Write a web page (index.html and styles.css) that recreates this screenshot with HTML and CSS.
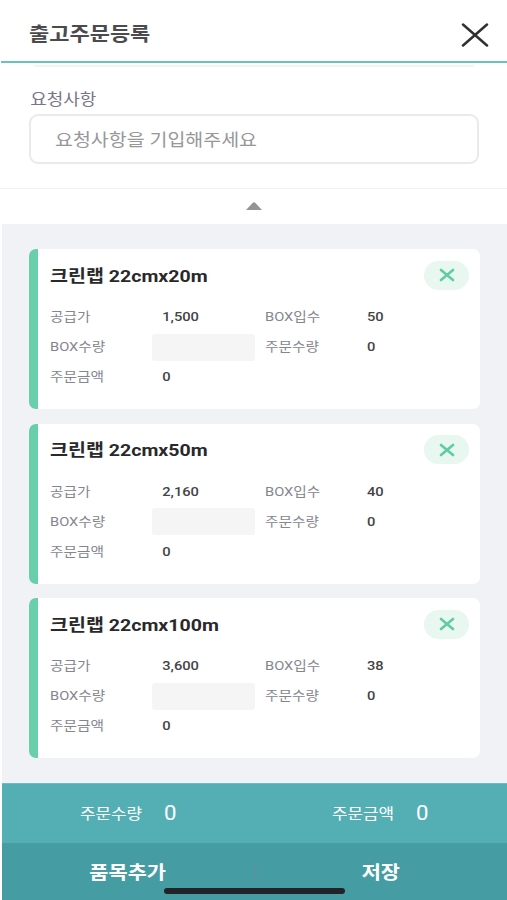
FILE: index.html
```html
<!DOCTYPE html>
<html lang="ko">
<head>
<meta charset="utf-8">
<title>출고주문등록</title>
<link rel="stylesheet" href="styles.css">
</head>
<body>
<div class="app">
  <header class="header">
    <h1 class="title wide">출고주문등록</h1>
    <svg class="close" width="28" height="24" viewBox="0 0 28 24"><path d="M2 1.5 26 22.5M26 1.5 2 22.5"/></svg>
  </header>
  <section class="request">
    <div class="field-edge"></div>
    <div class="request-label wide">요청사항</div>
    <div class="request-input"><span class="wide">요청사항을 기입해주세요</span></div>
  </section>
  <div class="toggle"><svg width="16" height="8" viewBox="0 0 16 8"><path d="M0 8 6.8.7Q8 -.4 9.2.7L16 8Z"/></svg></div>
  <main class="list">
    <article class="card">
      <div class="card-head"><h2 class="wide">크린랩 22cmx20m</h2><span class="remove"><svg width="16" height="14" viewBox="0 0 16 14"><path d="M2 2 14 12M14 2 2 12"/></svg></span></div>
      <div class="grid">
        <span class="label wide">공급가</span><span class="value wide">1,500</span><span class="label wide">BOX입수</span><span class="value wide">50</span>
        <span class="label wide">BOX수량</span><span class="qty"></span><span class="label wide">주문수량</span><span class="value wide">0</span>
        <span class="label wide">주문금액</span><span class="value wide">0</span>
      </div>
    </article>
    <article class="card">
      <div class="card-head"><h2 class="wide">크린랩 22cmx50m</h2><span class="remove"><svg width="16" height="14" viewBox="0 0 16 14"><path d="M2 2 14 12M14 2 2 12"/></svg></span></div>
      <div class="grid">
        <span class="label wide">공급가</span><span class="value wide">2,160</span><span class="label wide">BOX입수</span><span class="value wide">40</span>
        <span class="label wide">BOX수량</span><span class="qty"></span><span class="label wide">주문수량</span><span class="value wide">0</span>
        <span class="label wide">주문금액</span><span class="value wide">0</span>
      </div>
    </article>
    <article class="card">
      <div class="card-head"><h2 class="wide">크린랩 22cmx100m</h2><span class="remove"><svg width="16" height="14" viewBox="0 0 16 14"><path d="M2 2 14 12M14 2 2 12"/></svg></span></div>
      <div class="grid">
        <span class="label wide">공급가</span><span class="value wide">3,600</span><span class="label wide">BOX입수</span><span class="value wide">38</span>
        <span class="label wide">BOX수량</span><span class="qty"></span><span class="label wide">주문수량</span><span class="value wide">0</span>
        <span class="label wide">주문금액</span><span class="value wide">0</span>
      </div>
    </article>
  </main>
  <footer class="footer">
    <div class="totals">
      <div class="total"><span class="total-label wide">주문수량</span><span class="total-value wide">0</span></div>
      <div class="total"><span class="total-label wide">주문금액</span><span class="total-value wide">0</span></div>
    </div>
    <div class="actions">
      <div class="action"><span class="wide">품목추가</span></div>
      <div class="divider"></div>
      <div class="action"><span class="wide">저장</span></div>
      <div class="home-bar"></div>
    </div>
  </footer>
</div>
</body>
</html>
```
FILE: styles.css
```css
* { box-sizing: border-box; }
body { margin: 0; background: #fff; font-family: Roboto, "Noto Sans CJK KR", sans-serif; }
h1, h2 { margin: 0; }
svg { display: block; fill: none; }
.app { width: 507px; height: 900px; overflow: hidden; display: flex; flex-direction: column; }
.wide { display: inline-block; transform: scaleX(1.14); transform-origin: left center; white-space: nowrap; }

.header { height: 63px; flex: none; margin-left: 1px; padding: 8px 18px 0 28px; display: flex; align-items: center; justify-content: space-between; border-bottom: 2px solid #6cc2ba; }
.title { font-size: 19.3px; line-height: 28px; font-weight: 700; color: #4b4b4d; }
.close path { stroke: #303033; stroke-width: 2.5; stroke-linecap: round; }

.request { height: 126px; flex: none; padding: 0 28px 0 29px; border-bottom: 1px solid #f0f1f2; }
.field-edge { height: 4px; margin: 0 4px; border-bottom: 2px solid #f1f3f6; border-radius: 0 0 8px 8px; }
.request-label { display: block; margin-top: 21px; padding-left: 1px; font-size: 15.8px; line-height: 24px; color: #77758a; }
.request-input { height: 50px; margin-top: 2px; padding: 0 0 2px 24px; display: flex; align-items: center; border: 2px solid #e8eaec; border-radius: 9px; font-size: 17.1px; color: #97979a; }

.toggle { height: 35px; flex: none; display: flex; justify-content: center; padding: 13px 0 0 1px; }
.toggle path { fill: #949496; }

.list { flex: 1; margin-left: 2px; padding: 25px 27px 0; display: flex; flex-direction: column; gap: 14.5px; background: #f0f2f6; }
.card { height: 160px; flex: none; padding: 11px 11px 0 12px; background: #fff; border-left: 9px solid #69ceaa; border-radius: 7px; }
.card-head { height: 30px; display: flex; justify-content: space-between; align-items: center; }
.card-head h2 { margin-top: 1px; font-size: 17.15px; font-weight: 700; line-height: 26px; color: #29292c; }
.remove { width: 45px; height: 29px; border-radius: 15px; background: #e8f7ef; display: flex; align-items: center; justify-content: center; }
.remove path { stroke: #62cba7; stroke-width: 2.7; stroke-linecap: round; }
.grid { margin-top: 12px; display: grid; grid-template-columns: 102px 113px 102px 100px; grid-auto-rows: 30px; align-items: center; font-size: 12.9px; line-height: 20px; }
.label { color: #85858f; margin-left: -.5px; }
.value { color: #444446; font-weight: 500; }
.grid .value:nth-child(4n + 2) { padding-left: 9px; }
.qty { width: 103px; height: 27px; background: #f5f5f6; border-radius: 3px; }

.footer { flex: none; height: 117px; margin-left: 2px; color: #fff; }
.totals { height: 60px; display: flex; background: #54afb4; border-top: 1px solid #70bcc0; }
.total { flex: 1; padding-left: 77.5px; display: flex; align-items: center; }
.total-label { width: 84px; font-size: 14.8px; line-height: 22px; }
.total-value { font-size: 19.5px; line-height: 22px; }
.actions { position: relative; height: 57px; display: flex; background: #459da3; font-size: 18.3px; line-height: 26px; font-weight: 700; }
.action { flex: 1; display: flex; justify-content: center; padding-top: 17px; }
.action .wide { transform-origin: center; }
.divider { width: 1px; height: 16px; margin-top: 21px; background: #658fa1; }
.home-bar { position: absolute; left: 162px; bottom: 6px; width: 181px; height: 6px; border-radius: 3px; background: #202428; }
```
